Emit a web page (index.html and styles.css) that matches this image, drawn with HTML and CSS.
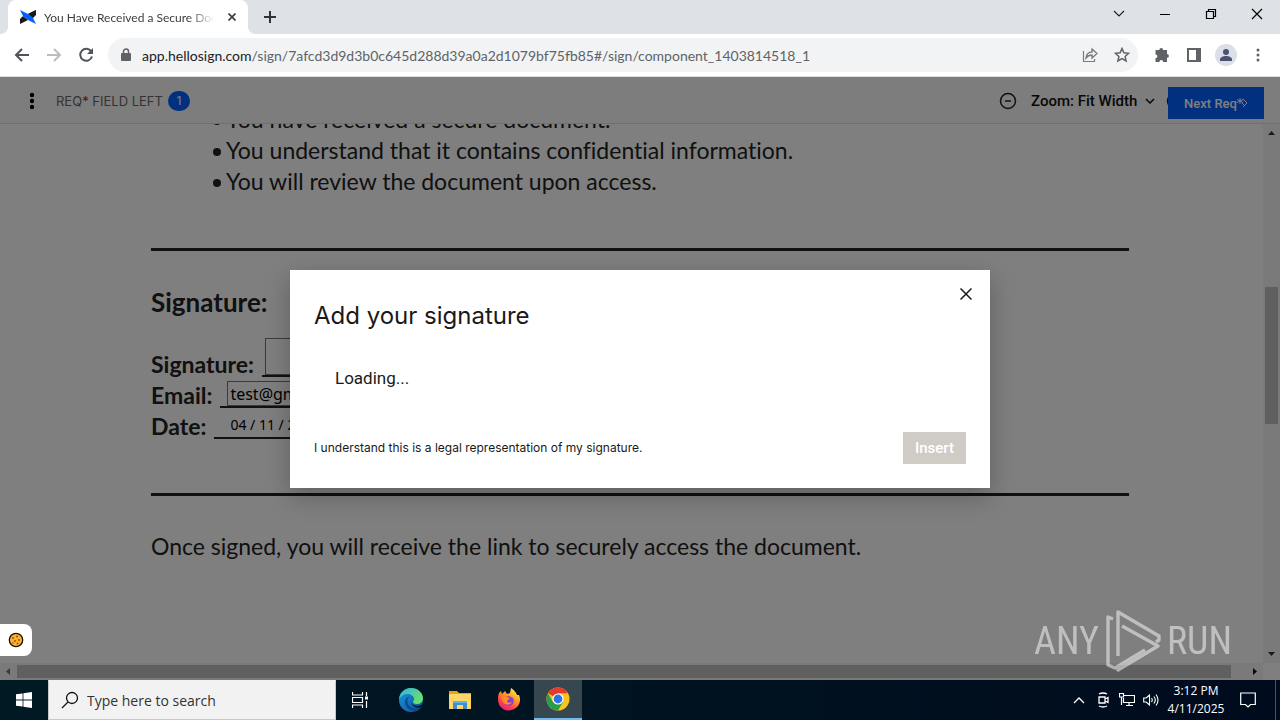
FILE: index.html
```html
<!DOCTYPE html>
<html lang="en">
<head>
<meta charset="UTF-8">
<meta name="viewport" content="width=device-width, initial-scale=1.0">
<title>You Have Received a Secure Document</title>
<link rel="stylesheet" href="styles.css">
</head>
<body>

<!-- tab strip -->
<header class="tabstrip">
  <div class="tab">
    <svg class="favicon" width="16" height="16" viewBox="0 0 16 16">
      <path d="M16 1L8 5l5 4z" fill="#1e1919"/>
      <path d="M16 1v5l-3 3-5-4z" fill="#1e1919"/>
      <path d="M0 15v-5l3-3 5 4z" fill="#1e1919"/>
      <path d="M0 1l8 4 5 4 3 6-8-4-5-4z" fill="#0061fe"/>
    </svg>
    <span class="tab-title">You Have Received a Secure Document</span>
    <button class="tab-close" aria-label="Close tab">
      <svg width="8" height="8" viewBox="0 0 8 8"><path d="M.5.5l7 7M7.5.5l-7 7" stroke="#3c4043" stroke-width="1.7"/></svg>
    </button>
  </div>
  <button class="new-tab" aria-label="New tab">
    <svg width="12" height="12" viewBox="0 0 12 12"><path d="M6 0v12M0 6h12" stroke="#303338" stroke-width="2"/></svg>
  </button>
  <div class="window-controls">
    <button aria-label="Search tabs"><svg width="12" height="12" viewBox="0 0 12 12"><path d="M1 3l5 5 5-5" fill="none" stroke="#222" stroke-width="1.2"/></svg></button>
    <button aria-label="Minimize"><svg width="12" height="12" viewBox="0 0 12 12"><path d="M1 6.500h10" stroke="#000"/></svg></button>
    <button aria-label="Restore"><svg width="12" height="12" viewBox="0 0 12 12"><path d="M1.500 3.500h7v7h-7zM3.500 3.500v-2h7v7h-2" fill="none" stroke="#000" stroke-width="1.200"/></svg></button>
    <button aria-label="Close"><svg width="12" height="12" viewBox="0 0 12 12"><path d="M1 1l10 10M11 1L1 11" stroke="#000" stroke-width="1.200"/></svg></button>
  </div>
</header>

<!-- toolbar -->
<nav class="toolbar">
  <button class="tool" aria-label="Back"><svg width="16" height="16" viewBox="0 0 16 16"><path d="M15 8H2M8 2L2 8l6 6" fill="none" stroke="#505357" stroke-width="2"/></svg></button>
  <button class="tool" aria-label="Forward"><svg width="16" height="16" viewBox="0 0 16 16"><path d="M1 8h13M8 2l6 6-6 6" fill="none" stroke="#babcbe" stroke-width="2"/></svg></button>
  <button class="tool" aria-label="Reload"><svg width="16" height="16" viewBox="0 0 16 16"><path d="M13.300 4.500A6 6 0 1 0 14 9.500" fill="none" stroke="#505357" stroke-width="2"/><path d="M15 1v6H9z" fill="#505357"/></svg></button>
  <div class="omnibox">
    <svg width="10" height="14" viewBox="0 0 10 14"><path d="M2.500 6V3.500a2.500 2.500 0 0 1 5 0V6" fill="none" stroke="#5f6368" stroke-width="1.500"/><rect x="0" y="5" width="10" height="8" rx="1" fill="#5f6368"/></svg>
    <label class="host" for="url">app.hellosign.com</label>
    <input id="url" class="url" type="text" value="/sign/7afcd3d9d3b0c645d288d39a0a2d1079bf75fb85#/sign/component_1403814518_1">
    <button class="tool" aria-label="Share"><svg width="16" height="16" viewBox="0 0 16 16"><path d="M1.500 4v10.500h11V12" fill="none" stroke="#777b80" stroke-width="1.200"/><path d="M4 11c.5-4 3-6 6-6V2l5 4.500-5 4.500V8c-3 0-4.500 1-6 3z" fill="none" stroke="#777b80" stroke-width="1.300"/></svg></button>
    <button class="tool" aria-label="Bookmark"><svg width="16" height="16" viewBox="0 0 16 16"><path d="M8 1.500l1.900 4.300 4.700.5-3.500 3.100 1 4.600L8 11.600 3.900 14l1-4.600L1.400 6.300l4.700-.5z" fill="none" stroke="#5f6368" stroke-width="1.500"/></svg></button>
  </div>
  <button class="tool" aria-label="Extensions"><svg width="16" height="16" viewBox="0 0 16 16"><path d="M5.300 3a1.900 1.900 0 0 1 3.800 0H13v4a1.900 1.900 0 0 1 0 3.800V15H9.200a1.900 1.900 0 0 0-3.800 0H1.500v-3.800a1.900 1.900 0 0 0 0-3.800V3z" fill="#5f6368"/></svg></button>
  <button class="tool" aria-label="Side panel"><svg width="14" height="14" viewBox="0 0 14 14"><path d="M1 1h12v12H1z" fill="none" stroke="#5f6368" stroke-width="2"/><path d="M9 1h4v12H9z" fill="#5f6368"/></svg></button>
  <button class="tool" aria-label="Profile"><svg width="22" height="22" viewBox="0 0 22 22"><circle cx="11" cy="11" r="11" fill="#dcdee8"/><circle cx="11" cy="8" r="3" fill="#4c5270"/><path d="M5 17v-1.500c0-2 3-3.500 6-3.500s6 1.500 6 3.500V17z" fill="#4c5270"/></svg></button>
  <button class="tool" aria-label="Menu"><svg width="4" height="14" viewBox="0 0 4 14"><g fill="#5f6368"><circle cx="2" cy="2" r="1.500"/><circle cx="2" cy="7" r="1.500"/><circle cx="2" cy="12" r="1.500"/></g></svg></button>
</nav>

<main class="stage">
  <div class="signer-bar">
    <button class="signer-menu" aria-label="Options"><svg width="6" height="18" viewBox="0 0 6 18"><circle cx="3" cy="3" r="2.200"/><circle cx="3" cy="9" r="2.200"/><circle cx="3" cy="15" r="2.200"/></svg></button>
    <span class="fields-left">REQ<span class="star">*</span> FIELD LEFT</span>
    <span class="count">1</span>
    <div class="zoom">
      <button class="zoom-step" aria-label="Zoom out"><svg width="18" height="18" viewBox="0 0 18 18"><circle cx="9" cy="9" r="7.500" fill="none" stroke="#222" stroke-width="1.500"/><path d="M6 9h6" stroke="#222" stroke-width="1.500"/></svg></button>
      <select class="zoom-select" aria-label="Zoom">
        <option>Zoom: Fit Width</option>
      </select>
      <svg class="chevron" width="10" height="6" viewBox="0 0 10 6"><path d="M1 1l4 4 4-4" fill="none" stroke="#111" stroke-width="1.500"/></svg>
      <button class="zoom-step" aria-label="Zoom in"><svg width="18" height="18" viewBox="0 0 18 18"><circle cx="9" cy="9" r="7.500" fill="none" stroke="#222" stroke-width="1.500"/><path d="M6 9h6M9 6v6" stroke="#222" stroke-width="1.500"/></svg></button>
    </div>
    <button class="next">Next Req<svg width="11" height="11" viewBox="0 0 11 11"><path d="M3 0v6M0 1.500l6 3M6 1.500l-6 3M6 1l4 4-4 4M5 5l3 3" fill="none" stroke="#fff"/></svg></button>
  </div>

  <div class="scroll-area">
    <article class="document">
      <ul class="terms">
        <li>You have received a secure document.</li>
        <li>You understand that it contains confidential information.</li>
        <li>You will review the document upon access.</li>
      </ul>
      <hr>
      <h2>Signature:</h2>
      <div class="row">
        <label for="sig">Signature:</label>
        <span class="line"><input id="sig" class="box sig" type="text"></span>
      </div>
      <div class="row">
        <label for="email">Email:</label>
        <span class="line"><input id="email" class="box email" type="text" value="test@gmail.com"></span>
      </div>
      <div class="row">
        <label for="date">Date:</label>
        <span class="line"><input id="date" class="date" type="text" value="04 / 11 / 2025"></span>
      </div>
      <hr>
      <p>Once signed, you will receive the link to securely access the document.</p>
    </article>
    <div class="vbar">
      <svg width="7" height="4" viewBox="0 0 7 4"><path d="M0 4l3.500-4L7 4z" fill="#333"/></svg>
      <span class="vthumb"></span>
      <svg width="7" height="4" viewBox="0 0 7 4"><path d="M0 0l3.500 4L7 0z" fill="#333"/></svg>
    </div>
    <div class="hbar">
      <svg width="4" height="7" viewBox="0 0 4 7"><path d="M4 0L0 3.500 4 7z" fill="#777"/></svg>
      <span class="hthumb"></span>
      <svg width="4" height="7" viewBox="0 0 4 7"><path d="M0 0l4 3.500L0 7z" fill="#111"/></svg>
    </div>
  </div>

  <div class="overlay">
    <section class="modal" role="dialog" aria-labelledby="modal-title">
      <button class="modal-close" aria-label="Close"><svg width="12" height="12" viewBox="0 0 12 12"><path d="M.5.5l11 11M11.500.5l-11 11" stroke="#1a1918" stroke-width="1.500"/></svg></button>
      <h1 id="modal-title">Add your signature</h1>
      <p class="loading">Loading...</p>
      <footer class="modal-footer">
        <span>I understand this is a legal representation of my signature.</span>
        <button class="insert" disabled>Insert</button>
      </footer>
    </section>
  </div>

  <button class="cookie" aria-label="Cookie settings">
    <svg width="16" height="16" viewBox="0 0 16 16"><circle cx="8" cy="8" r="6.700" fill="#f9b233" stroke="#1a1200" stroke-width="1.300"/><g fill="#a84a12"><circle cx="5" cy="6" r="1"/><circle cx="9" cy="4.500" r="1"/><circle cx="11" cy="8" r="1"/><circle cx="7" cy="9" r="1"/><circle cx="5" cy="11" r=".8"/><circle cx="9.500" cy="11.500" r="1"/></g></svg>
  </button>

  <div class="watermark">
    <span>ANY</span>
    <svg width="56" height="62" viewBox="0 0 56 62">
      <g fill="none" stroke="#fff" stroke-width="3.400" stroke-linejoin="round">
        <path d="M8 9L3 7v48l7 3 30-18"/>
        <path d="M13 46V2l41 24v4l-3 2"/>
        <path d="M17 16l36 20-40 24v-5"/>
      </g>
    </svg>
    <span>RUN</span>
  </div>
</main>

<!-- windows taskbar -->
<footer class="taskbar">
  <button class="start" aria-label="Start"><svg width="16" height="16" viewBox="0 0 16 16"><path d="M0 2.300L6.600 1.400v6.200H0zM7.400 1.300L16 0v7.600H7.400zM0 8.400h6.600v6.200L0 13.700zM7.400 8.400H16V16l-8.600-1.300z" fill="#fff"/></svg></button>
  <div class="search">
    <svg width="18" height="18" viewBox="0 0 18 18"><circle cx="11" cy="7" r="5.500" fill="none" stroke="#111" stroke-width="1.300"/><path d="M7 11l-6 6" stroke="#111" stroke-width="1.300"/></svg>
    <input type="text" placeholder="Type here to search" aria-label="Search">
  </div>
  <button class="app" aria-label="Task View"><svg width="16" height="16" viewBox="0 0 16 16"><path d="M.5 0v3h10V0M.5 16v-3h10v3M.5 5.500h10v5H.5zM14.500 0v4M14.500 9v7" fill="none" stroke="#fff" stroke-width="1.200"/><path d="M13 4.500h3v3h-3z" fill="#fff"/></svg></button>
  <div class="pinned">
    <button class="app" aria-label="Edge">
      <svg width="24" height="24" viewBox="0 0 24 24">
        <defs>
          <linearGradient id="edge-top" x1="0" y1="0" x2="1" y2=".6"><stop offset="0" stop-color="#2db4e8"/><stop offset="1" stop-color="#6be06a"/></linearGradient>
          <linearGradient id="edge-low" x1="0" y1="0" x2="1" y2="1"><stop offset="0" stop-color="#1b98dd"/><stop offset="1" stop-color="#0c4f9c"/></linearGradient>
        </defs>
        <circle cx="12" cy="12" r="12" fill="url(#edge-low)"/>
        <path d="M0 11C1 4 6 0 12 0c7 0 12 5 12 10 0 4-3 6-6 6-3 0-4-1-4-2 0-1 1-1 1-3 0-3-3-5-7-5-3 0-6 2-8 5z" fill="url(#edge-top)"/>
        <path d="M10 9c-3 3-2 9 4 11 3 1 6 0 8-2l1 0c-1 2-3 4-5 5-7 1-12-4-12-9 0-3 2-5 4-5z" fill="#114a8b"/>
        <path d="M13 13c-1 4 4 7 11 3l-1 3c-4 2-12 0-10-6z" fill="#001b26"/>
      </svg>
    </button>
    <button class="app" aria-label="File Explorer">
      <svg width="22" height="18" viewBox="0 0 22 18"><path d="M0 0h8l2 2h12v3H0z" fill="#e8a317"/><path d="M0 3h22v15H0z" fill="#ffd766"/><path d="M4 10h14v8h-4v-4H8v4H4z" fill="#3f8fc9"/><path d="M4 10h14v2H4z" fill="#63b3e6"/></svg>
    </button>
    <button class="app" aria-label="Firefox">
      <svg width="24" height="24" viewBox="0 0 24 24">
        <defs><linearGradient id="fox" x1=".8" y1="0" x2=".2" y2="1"><stop offset="0" stop-color="#fff44f"/><stop offset=".4" stop-color="#ff9a22"/><stop offset=".7" stop-color="#ff4548"/><stop offset="1" stop-color="#e31587"/></linearGradient></defs>
        <path d="M2 5l2-2 1 3 3-3 2 3 3-1 1-5c3 2 5 4 6 7l2 0c2 4 1 9-2 12-4 4-11 5-15 1C1 17 0 11 2 5z" fill="url(#fox)"/>
        <path d="M8 9l4-1 4 2c2 4 0 7-4 8-4 0-6-3-6-6l3 0z" fill="#8a3fd1"/>
        <path d="M4 9c2-2 5-1 6 0l3 1-3 3c0 2 3 2 5 1-1 3-7 4-9 0z" fill="#ff8a2a"/>
      </svg>
    </button>
    <button class="app active" aria-label="Chrome">
      <svg width="24" height="24" viewBox="0 0 24 24">
        <circle cx="12" cy="12" r="11.500" fill="#fcc31e"/>
        <path d="M12 12L2 6.300A11.500 11.500 0 0 1 22 6.300H12z" fill="#e33b2e"/>
        <path d="M2 6.300A11.500 11.500 0 0 0 12 23.500l5-8.600L12 12 7 15z" fill="#2b9d48"/>
        <circle cx="12" cy="12" r="5.600" fill="#fff"/><circle cx="12" cy="12" r="4.400" fill="#2c73e8"/>
      </svg>
    </button>
  </div>
  <div class="tray">
    <button aria-label="Show hidden icons"><svg width="12" height="8" viewBox="0 0 12 8"><path d="M1 7l5-5 5 5" fill="none" stroke="#fff" stroke-width="1.300"/></svg></button>
    <button aria-label="Meet Now"><svg width="14" height="16" viewBox="0 0 14 16"><path d="M3 5h6v6H3zM9 7l3-1.500v5L9 9M3 2q4-2 8 0M3 14q4 2 8 0" fill="none" stroke="#fff" stroke-width="1.300"/></svg></button>
    <button aria-label="Network"><svg width="16" height="14" viewBox="0 0 16 14"><path d="M5 2.500h10.500v7H4.500V5M7 12.500h7M10 10v3M.5.500h4V4h-4zM2.500 4v8" fill="none" stroke="#fff" stroke-width="1.200"/></svg></button>
    <button aria-label="Volume"><svg width="16" height="14" viewBox="0 0 16 14"><path d="M.7 5h2.500L6.500 2v10L3.200 9H.7zM8.500 5q1.500 2 0 4M10.800 3.500q3 3.500 0 7M13 1.500q4 5.500 0 11" fill="none" stroke="#fff" stroke-width="1.100"/></svg></button>
    <div class="clock"><span>3:12 PM</span><span>4/11/2025</span></div>
    <button class="notify" aria-label="Notifications"><svg width="16" height="16" viewBox="0 0 16 16"><path d="M.7 1h14.600v11.500H10.500L8 15l-2.500-2.500H.7z" fill="none" stroke="#fff" stroke-width="1.200"/></svg></button>
    <button class="desktop" aria-label="Show desktop"></button>
  </div>
</footer>

</body>
</html>
```
FILE: styles.css
```css
* {
  box-sizing: border-box;
}
body {
  margin: 0;
  height: 100vh;
  display: flex;
  flex-direction: column;
  overflow: hidden;
  font-family: "Open Sans", "Noto Sans", sans-serif;
  color: #1a1918;
}
button {
  display: flex;
  align-items: center;
  justify-content: center;
  padding: 0;
  border: none;
  background: none;
  font-family: inherit;
  flex: none;
}
input, select {
  font-family: inherit;
  border: none;
  background: none;
  padding: 0;
  margin: 0;
  outline: none;
}
svg {
  flex: none;
}

/* tab strip */
.tabstrip {
  display: flex;
  height: 34px;
  padding-left: 8px;
  background: #dee1e6;
  flex: none;
}
.tab {
  position: relative;
  display: flex;
  align-items: center;
  width: 240px;
  padding: 0 8px 0 12px;
  background: #fff;
  border-radius: 8px 8px 0 0;
}
.tab::before, .tab::after {
  content: "";
  position: absolute;
  bottom: 0;
  width: 8px;
  height: 8px;
}
.tab::before {
  left: -8px;
  background: radial-gradient(circle at 0 0, #dee1e6 8px, #fff 8px);
}
.tab::after {
  right: -8px;
  background: radial-gradient(circle at 100% 0, #dee1e6 8px, #fff 8px);
}
.tab-title {
  flex: 1;
  margin-left: 8px;
  font-family: Lato, sans-serif;
  font-size: 12px;
  white-space: nowrap;
  overflow: hidden;
  color: #3c4043;
  mask-image: linear-gradient(to right, #000 85%, transparent);
}
.tab-close {
  width: 16px;
  height: 16px;
  margin-left: 10px;
}
.new-tab {
  width: 28px;
  margin-left: 8px;
}
.window-controls {
  display: flex;
  height: 28px;
  margin-left: auto;
}
.window-controls button {
  width: 46px;
}

/* toolbar */
.toolbar {
  display: flex;
  align-items: center;
  height: 43px;
  padding: 0 6px;
  background: #fff;
  border-bottom: 1px solid #dcdcdc;
  flex: none;
}
.tool {
  width: 32px;
  height: 32px;
}
.omnibox {
  flex: 1;
  display: flex;
  align-items: center;
  height: 34px;
  margin: 0 8px 0 6px;
  padding-left: 13px;
  border-radius: 17px;
  background: #f1f3f4;
  font-family: Lato, sans-serif;
  font-size: 14px;
}
.host {
  margin-left: 11px;
  color: #202124;
}
.url {
  flex: 1;
  font-size: 14px;
  color: #5f6368;
}

/* signing page */
.stage {
  position: relative;
  flex: 1;
  min-height: 0;
  display: flex;
  flex-direction: column;
  background: #fff;
}
.signer-bar {
  display: flex;
  align-items: center;
  height: 47px;
  padding: 2px 16px 0;
  border-bottom: 1px solid #e0e0dc;
  background: #f9faf9;
  font-family: Inter, Roboto, sans-serif;
  flex: none;
}
.signer-menu {
  width: 32px;
  height: 32px;
}
.fields-left {
  margin-left: 8px;
  font-size: 13px;
  color: #6b6966;
}
.star {
  color: #b4232a;
}
.count {
  width: 22px;
  height: 20px;
  margin-left: 5px;
  border-radius: 10px;
  background: #0061fe;
  color: #fff;
  font-size: 12px;
  line-height: 20px;
  text-align: center;
}
.zoom {
  display: flex;
  align-items: center;
  margin-left: auto;
}
.zoom-step {
  width: 18px;
  height: 18px;
}
.zoom-select {
  appearance: none;
  margin-left: 14px;
  font-family: Roboto, sans-serif;
  font-size: 15px;
  font-weight: 500;
  color: #111;
}
.chevron {
  margin: 0 11px 0 7px;
}
.next {
  position: relative;
  width: 96px;
  height: 32px;
  margin: 4px 0 0 -16px;
  background: #0061fe;
  color: #fff;
  font-family: Roboto, sans-serif;
  font-size: 13px;
  font-weight: 500;
}
.scroll-area {
  flex: 1;
  min-height: 0;
  display: grid;
  grid-template-columns: 1fr 17px;
  grid-template-rows: minmax(0, 1fr) 17px;
}

/* document */
.document {
  overflow: hidden;
  padding: 0 134px 0 151px;
  font-family: Lato, sans-serif;
  font-size: 23px;
  line-height: 31px;
  font-variant-ligatures: none;
  color: #222;
}
.terms {
  margin: -20px 0 51px;
  padding: 0 0 0 75px;
  list-style: none;
}
.terms li::before {
  content: "";
  float: left;
  width: 8px;
  height: 8px;
  margin: 13px 0 0 -13px;
  border-radius: 50%;
  background: #222;
}
.document hr {
  height: 3px;
  margin: 0;
  border: none;
  background: #222;
}
.document h2 {
  margin: 34px 0 19px;
  font-size: 26px;
  line-height: 34px;
}
.row {
  display: flex;
  align-items: flex-end;
}
.row label {
  margin-bottom: 2px;
  font-weight: bold;
  line-height: 29px;
}
.line {
  display: flex;
  width: 280px;
  margin: 0 0 4px 8px;
  border-bottom: 2px solid #222;
}
.box {
  border: 1px solid #777;
}
.sig {
  width: 200px;
  height: 37px;
  margin-left: 3px;
}
.email {
  width: 200px;
  height: 25px;
  margin-left: 7px;
  padding-left: 2px;
  font-family: "Noto Sans", sans-serif;
  font-size: 16px;
}
.date {
  height: 25px;
  margin-left: 16px;
  font-family: "Noto Sans", sans-serif;
  font-size: 14px;
}
.row + hr {
  margin-top: 50px;
}
.document p {
  margin: 35px 0 0;
}

/* scrollbars */
.vbar, .hbar {
  display: flex;
  align-items: center;
  background: #f5f5f5;
}
.vbar {
  flex-direction: column;
  padding: 7px 0;
}
.vthumb {
  width: 13px;
  height: 26%;
  margin: 152px 0 auto;
  background: #c1c1c1;
}
.hbar {
  padding: 0 6px;
}
.hthumb {
  flex: 1;
  height: 13px;
  margin: 0 22px 0 7px;
  background: #c1c1c1;
}

/* modal */
.overlay {
  position: absolute;
  inset: 0;
  display: flex;
  align-items: center;
  justify-content: center;
  background: rgba(0, 0, 0, 0.5);
}
.modal {
  position: relative;
  width: 700px;
  max-width: 90%;
  padding: 32px 24px 24px;
  background: #fff;
  box-shadow: 0 8px 24px rgba(0, 0, 0, 0.25);
  font-family: Inter, sans-serif;
}
.modal-close {
  position: absolute;
  top: 12px;
  right: 12px;
  width: 24px;
  height: 24px;
}
.modal h1 {
  margin: 0;
  font-size: 24px;
  font-weight: 400;
  line-height: 28px;
}
.loading {
  margin: 36px 0 42px 21px;
  font-family: Roboto, sans-serif;
  font-size: 17px;
  line-height: 24px;
}
.modal-footer {
  display: flex;
  align-items: center;
  justify-content: space-between;
  font-size: 12px;
}
.insert {
  width: 63px;
  height: 32px;
  background: #cfccc6;
  color: #fff;
  font-family: Roboto, sans-serif;
  font-size: 15px;
  font-weight: 500;
}
.cookie {
  position: absolute;
  left: 0;
  bottom: 24px;
  width: 32px;
  height: 32px;
  background: #fff;
  border-radius: 0 8px 8px 0;
}
.watermark {
  position: absolute;
  right: 48px;
  bottom: 8px;
  display: flex;
  align-items: center;
  gap: 6px;
  color: #fff;
  opacity: 0.5;
  font-family: "Roboto Condensed", Roboto, sans-serif;
  font-size: 38px;
}

/* taskbar */
.taskbar {
  display: flex;
  height: 40px;
  background: linear-gradient(to right, #001a24, #00101f 70%, #000b1e);
  color: #fff;
  flex: none;
}
.start, .app {
  width: 48px;
  height: 40px;
}
.search {
  display: flex;
  align-items: center;
  width: 288px;
  padding-left: 12px;
  background: #f2f2f2;
  border: 1px solid #c8c8c8;
  border-top-color: #f2f2f2;
}
.search input {
  flex: 1;
  margin-left: 8px;
  font-size: 14px;
}
.search input::placeholder {
  color: #333;
}
.pinned {
  display: flex;
  gap: 1px;
  margin-left: 3px;
}
.active {
  background: #36474f;
  border-bottom: 2px solid #76b9ed;
}
.tray {
  display: flex;
  margin-left: auto;
}
.tray button {
  width: 24px;
}
.clock {
  display: flex;
  flex-direction: column;
  align-items: center;
  width: 66px;
  padding-top: 2px;
  font-family: "Open Sans", sans-serif;
  font-size: 12px;
  line-height: 18px;
}
.tray .notify {
  width: 38px;
}
.tray .desktop {
  width: 5px;
  margin-left: 8px;
  border-left: 1px solid #4a5560;
}
```
